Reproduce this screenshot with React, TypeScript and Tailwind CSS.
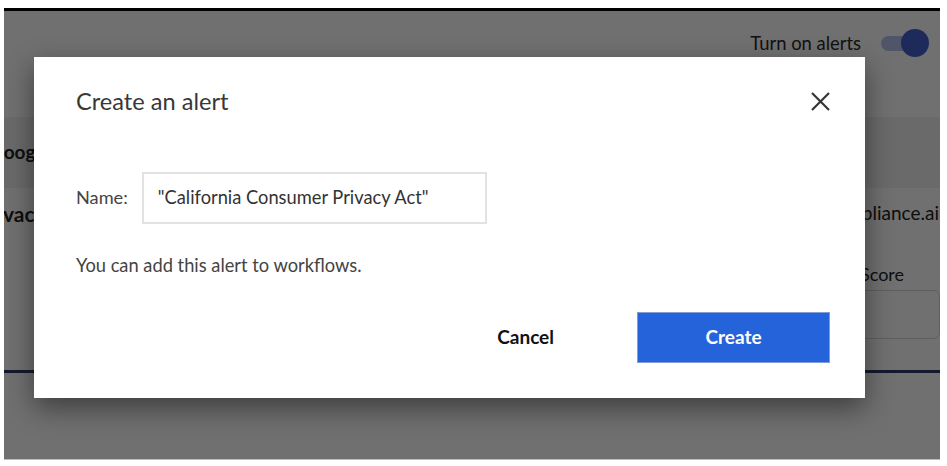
import React from 'react'

const FONT = "font-['Lato','Noto_Sans',sans-serif]"

function Toggle() {
  return (
    <div className="relative h-[28px] w-[48px]">
      <div className="absolute left-0 top-[7px] h-[15px] w-[34px] rounded-full bg-[#b9c2f0]" />
      <div className="absolute right-0 top-0 h-[28px] w-[28px] rounded-full bg-[#4560cc]" />
    </div>
  )
}

function CloseIcon() {
  return (
    <svg width="19" height="19" viewBox="0 0 19 19" fill="none" stroke="#333" strokeWidth="2.2">
      <line x1="1" y1="1" x2="18" y2="18" />
      <line x1="18" y1="1" x2="1" y2="18" />
    </svg>
  )
}

// page that sits behind the dimmed overlay
function BackgroundPage() {
  return (
    <div className="flex h-full flex-col bg-white text-[#222]">
      <div className="flex h-[106px] items-start justify-end gap-[20px] pr-[11px] pt-[18px]">
        <span className="text-[18.4px] leading-[28px] text-[#2a2a2a]">Turn on alerts</span>
        <Toggle />
      </div>

      <div className="flex h-[71px] items-center bg-[#f2f2f2]">
        <span className="-ml-[14px] text-[19px] font-bold">Google</span>
      </div>

      <div className="flex items-start justify-between pt-[13px]">
        <span className="-ml-[27px] text-[21px] font-bold leading-[26px]">Privacy</span>
        <span className="mr-[1px] text-[19px] leading-[24px]">compliance.ai</span>
      </div>

      <div className="mt-[35px] flex justify-end">
        <div className="w-[80px] text-[18px] leading-[24px]">Score</div>
      </div>

      <div className="mt-[4px] flex justify-end">
        <div className="h-[49px] w-[90px] rounded-[6px] border border-[#d8d8d8]" />
      </div>

      <div className="mt-[31px] h-[3px] bg-[#2e3a66]" />
    </div>
  )
}

export default function App() {
  return (
    <div className={`h-[466px] w-[947px] bg-white pl-[4px] pt-[8px] ${FONT}`}>
      <div className="relative h-[452px] w-[936px] overflow-hidden border-b border-t-[3px] border-b-[#bdbdbd] border-t-black">
        <BackgroundPage />
        <div className="absolute inset-0 bg-black/[0.56]" />

        <div className="absolute left-[30px] top-[46px] w-[831px] bg-white pb-[35px] pl-[42px] pr-[35px] pt-[30px] shadow-[0_10px_26px_rgba(0,0,0,0.45)]">
          <div className="flex items-center justify-between">
            <h2 className="text-[23.6px] leading-[28px] text-[#383838]">Create an alert</h2>
            <button>
              <CloseIcon />
            </button>
          </div>

          <div className="mt-[57px] flex items-center">
            <label className="text-[18.2px] text-[#444]">Name:</label>
            <div className="ml-[14px] flex h-[52px] w-[345px] items-center border-2 border-[#e2e2e2] pl-[14px] text-[18.3px] text-[#333]">
              "California Consumer Privacy Act"
            </div>
          </div>

          <p className="mt-[29px] text-[18.3px] leading-[24px] text-[#444]">
            You can add this alert to workflows.
          </p>

          <div className="mt-[35px] flex items-center justify-end">
            <button className="mr-[83px] text-[19px] font-bold text-[#111]">Cancel</button>
            <button className="h-[51px] w-[193px] border border-[#7f9bd8] bg-[#2563db] text-[19px] font-bold text-white">
              Create
            </button>
          </div>
        </div>
      </div>
    </div>
  )
}
